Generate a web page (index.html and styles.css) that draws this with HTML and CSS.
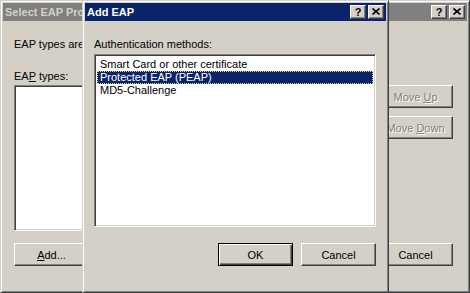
FILE: index.html
```html
<!DOCTYPE html>
<html lang="en">

<head>
    <meta charset="UTF-8">
    <title>Add EAP</title>
    <link rel="stylesheet" href="styles.css">
</head>

<body>

    <!-- Background dialog -->
    <div class="window back">
        <div class="titlebar inactive">
            <span class="title clipped">Select EAP Providers</span>
            <div class="cap-buttons">
                <span class="cap-btn">?</span>
                <span class="cap-btn">
                    <svg width="8" height="7" viewBox="0 0 8 7"><path d="M0.5 0.5 L7.5 6.5 M7.5 0.5 L0.5 6.5" stroke="#000" stroke-width="1.6" fill="none"/></svg>
                </span>
            </div>
        </div>
        <div class="back-body">
            <p class="label first clipped-label">EAP types are listed in order of preference.</p>
            <p class="label second">EA<u>P</u> types:</p>
            <div class="back-row">
                <div class="listbox back-list"></div>
                <div class="side-buttons">
                    <button class="btn" disabled>Move <u>U</u>p</button>
                    <button class="btn" disabled>Move <u>D</u>own</button>
                </div>
            </div>
            <div class="back-footer">
                <button class="btn"><u>A</u>dd...</button>
                <button class="btn push">Cancel</button>
            </div>
        </div>
    </div>

    <!-- Add EAP dialog (on top) -->
    <div class="window front">
        <div class="titlebar">
            <span class="title">Add EAP</span>
            <div class="cap-buttons">
                <span class="cap-btn">?</span>
                <span class="cap-btn">
                    <svg width="8" height="7" viewBox="0 0 8 7"><path d="M0.5 0.5 L7.5 6.5 M7.5 0.5 L0.5 6.5" stroke="#000" stroke-width="1.6" fill="none"/></svg>
                </span>
            </div>
        </div>
        <div class="front-body">
            <p class="label first">Authentication methods:</p>
            <div class="listbox front-list">
                <div class="item">Smart Card or other certificate</div>
                <div class="item selected">Protected EAP (PEAP)</div>
                <div class="item">MD5-Challenge</div>
            </div>
            <div class="front-footer">
                <button class="btn default">OK</button>
                <button class="btn">Cancel</button>
            </div>
        </div>
    </div>

</body>

</html>
```

FILE: styles.css
```css
/* Global */
body {
    margin: 0;
    width: 470px;
    height: 293px;
    overflow: hidden;
    position: relative;
    background-color: #d4d0c8;
    font-family: "Liberation Sans", Arial, sans-serif;
    font-size: 11px;
    color: #000;
}

/* Window frame */
.window {
    box-sizing: border-box;
    background-color: #d4d0c8;
    border: 1px solid;
    border-color: #d4d0c8 #404040 #404040 #d4d0c8;
    box-shadow: inset 1px 1px #fff, inset -1px -1px #808080;
    padding: 2px;
    display: flex;
    flex-direction: column;
}

.back {
    width: 470px;
    height: 293px;
}

.front {
    position: absolute;
    left: 82px;
    top: 0;
    width: 307px;
    height: 293px;
}

/* Title bar */
.titlebar {
    height: 18px;
    display: flex;
    align-items: center;
    padding: 0 2px;
    background-color: #0a246a;
    color: #fff;
    font-weight: bold;
}

.titlebar.inactive {
    background-color: #808080;
    color: #d4d0c8;
}

.title {
    flex: 1;
    white-space: nowrap;
    overflow: hidden;
    line-height: 18px;
}

/* only the part left of the Add EAP dialog shows */
.title.clipped {
    flex: none;
    width: 77px;
    margin-right: auto;
}

.cap-buttons {
    display: flex;
    gap: 2px;
}

.cap-btn {
    box-sizing: border-box;
    width: 16px;
    height: 14px;
    border: 1px solid;
    border-color: #fff #404040 #404040 #fff;
    box-shadow: inset -1px -1px #808080;
    background-color: #d4d0c8;
    color: #000;
    font-weight: bold;
    font-size: 11px;
    line-height: 12px;
    display: flex;
    align-items: center;
    justify-content: center;
    padding-bottom: 1px;
}

/* Text labels */
.label {
    margin: 0;
    line-height: 13px;
    white-space: nowrap;
}

.label.first {
    margin-top: 17px;
}

.label.second {
    margin-top: 19px;
}

.clipped-label {
    width: 68px;
    overflow: hidden;
}

/* Push buttons */
.btn {
    box-sizing: border-box;
    width: 75px;
    height: 23px;
    padding: 0;
    border: 1px solid;
    border-color: #fff #404040 #404040 #fff;
    box-shadow: inset -1px -1px #808080;
    background-color: #d4d0c8;
    font-family: inherit;
    font-size: 11px;
    color: #000;
    flex-shrink: 0;
}

.btn.default {
    border-color: #000;
    box-shadow: inset 1px 1px #fff, inset -1px -1px #404040, inset -2px -2px #808080;
}

.btn:disabled {
    color: #808080;
    text-shadow: 1px 1px #fff;
}

/* List boxes */
.listbox {
    box-sizing: border-box;
    background-color: #fff;
    border: 1px solid;
    border-color: #808080 #fff #fff #808080;
    box-shadow: inset 1px 1px #404040, inset -1px -1px #d4d0c8;
    padding: 3px 2px 2px 2px;
}

.item {
    height: 13px;
    line-height: 13px;
    padding-left: 3px;
    white-space: nowrap;
}

.item.selected {
    box-sizing: border-box;
    background-color: #0a246a;
    color: #fff;
    border: 1px dotted #e8d37a;
    padding-left: 2px;
    line-height: 11px;
}

/* Background dialog body */
.back-body {
    padding: 0 14px 0 11px;
    display: flex;
    flex-direction: column;
}

.back-row {
    display: flex;
    gap: 9px;
    margin-top: 2px;
}

.back-list {
    flex: 1;
    height: 146px;
}

.side-buttons {
    display: flex;
    flex-direction: column;
    gap: 8px;
}

.back-footer {
    display: flex;
    gap: 8px;
    margin-top: 12px;
}

.back-footer .push {
    margin-left: auto;
}

/* Add EAP body */
.front-body {
    padding: 0 10px 0 9px;
    display: flex;
    flex-direction: column;
}

.front-list {
    margin-top: 3px;
    height: 173px;
}

.front-footer {
    display: flex;
    justify-content: flex-end;
    gap: 8px;
    margin-top: 16px;
}
```
